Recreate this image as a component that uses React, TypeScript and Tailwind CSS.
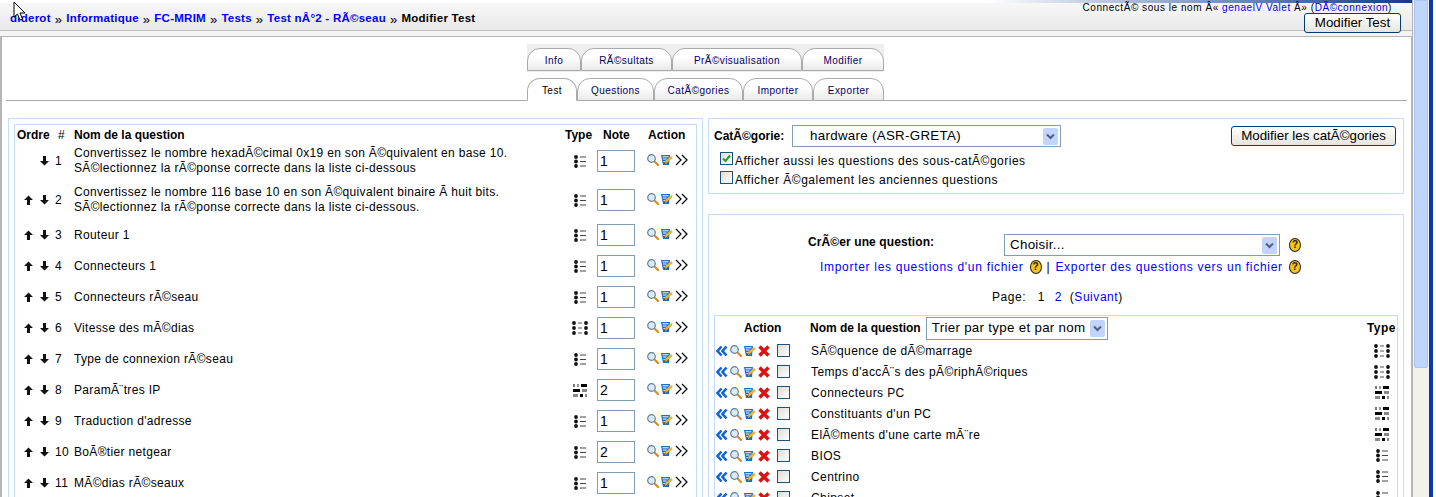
import React from "react"

const leftRows = [
  { n: 1, lines: ["Convertissez le nombre hexadÃ©cimal 0x19 en son Ã©quivalent en base 10.", "SÃ©lectionnez la rÃ©ponse correcte dans la liste ci-dessous"], type: "multi", note: "1", gap: "mb-[17px]" },
  { n: 2, lines: ["Convertissez le nombre 116 base 10 en son Ã©quivalent binaire Ã  huit bits.", "SÃ©lectionnez la rÃ©ponse correcte dans la liste ci-dessous."], type: "multi", note: "1", gap: "mb-[13px]" },
  { n: 3, lines: ["Routeur 1"], type: "multi", note: "1", gap: "mb-[9px]" },
  { n: 4, lines: ["Connecteurs 1"], type: "multi", note: "1", gap: "mb-[9px]" },
  { n: 5, lines: ["Connecteurs rÃ©seau"], type: "multi", note: "1", gap: "mb-[9px]" },
  { n: 6, lines: ["Vitesse des mÃ©dias"], type: "match", note: "1", gap: "mb-[9px]" },
  { n: 7, lines: ["Type de connexion rÃ©seau"], type: "multi", note: "1", gap: "mb-[9px]" },
  { n: 8, lines: ["ParamÃ¨tres IP"], type: "cloze", note: "2", gap: "mb-[9px]" },
  { n: 9, lines: ["Traduction d'adresse"], type: "multi", note: "1", gap: "mb-[9px]" },
  { n: 10, lines: ["BoÃ®tier netgear"], type: "multi", note: "2", gap: "mb-[9px]" },
  { n: 11, lines: ["MÃ©dias rÃ©seaux"], type: "multi", note: "1", gap: "mb-[9px]" },
]

const rightRows = [
  { name: "SÃ©quence de dÃ©marrage", type: "match" },
  { name: "Temps d'accÃ¨s des pÃ©riphÃ©riques", type: "match" },
  { name: "Connecteurs PC", type: "cloze" },
  { name: "Constituants d'un PC", type: "cloze" },
  { name: "ElÃ©ments d'une carte mÃ¨re", type: "cloze" },
  { name: "BIOS", type: "multi" },
  { name: "Centrino", type: "multi" },
  { name: "Chipset", type: "multi" },
]

function ArrowUp() {
  return (
    <svg width="9" height="10" viewBox="0 0 9 10">
      <path d="M4.5 0.5 L9 5 L6 5 L6 10 L3 10 L3 5 L0 5 Z" fill="#111" />
    </svg>
  )
}

function ArrowDown() {
  return (
    <svg width="9" height="10" viewBox="0 0 9 10">
      <path d="M4.5 9.5 L9 5 L6 5 L6 0 L3 0 L3 5 L0 5 Z" fill="#111" />
    </svg>
  )
}

function Magnifier() {
  return (
    <svg width="12" height="12" viewBox="0 0 12 12">
      <path d="M7 7 L11 11" stroke="#d98a1e" strokeWidth="2.2" strokeLinecap="round" />
      <circle cx="4.5" cy="4.5" r="3.8" fill="#dbeaf5" stroke="#5f7f96" strokeWidth="1.2" />
    </svg>
  )
}

function EditIcon() {
  return (
    <svg width="12" height="12" viewBox="0 0 12 12">
      <path d="M0 1 H9 L8 11 H2 Z" fill="#1d6fc4" />
      <path d="M1.5 2.8 H7.5 M2 5 H5.5 M2.5 7.5 H4" stroke="#fff" strokeWidth="1" />
      <path d="M3.5 9 L11 3" stroke="#f2b32a" strokeWidth="2.4" />
      <path d="M3 9.5 L4.5 8.2" stroke="#333" strokeWidth="1" />
    </svg>
  )
}

function ChevronsRight() {
  return (
    <svg width="13" height="12" viewBox="0 0 13 12">
      <path d="M1 1 L6 6 L1 11 M7 1 L12 6 L7 11" fill="none" stroke="#000" strokeWidth="1.2" />
    </svg>
  )
}

function ChevronsLeft() {
  return (
    <svg width="12" height="12" viewBox="0 0 12 12">
      <path d="M5.5 1.5 L1.5 6 L5.5 10.5 M10.5 1.5 L6.5 6 L10.5 10.5" fill="none" stroke="#0f62dc" strokeWidth="2.6" />
    </svg>
  )
}

function Cross() {
  return (
    <svg width="12" height="12" viewBox="0 0 12 12">
      <path d="M1.5 1.5 L10.5 10.5 M10.5 1.5 L1.5 10.5" stroke="#dd1111" strokeWidth="3.4" />
    </svg>
  )
}

function TypeIcon({ type }: { type: string }) {
  if (type === "match") {
    return (
      <svg width="16" height="14" viewBox="0 0 16 14">
        {[2, 7, 12].map((y) => (
          <g key={y}>
            <circle cx="2" cy={y} r="1.9" fill="#111" />
            <rect x="6" y={y - 0.5} width="4" height="1" fill="#555" />
            <circle cx="14" cy={y} r="1.9" fill="#111" />
          </g>
        ))}
      </svg>
    )
  }
  if (type === "cloze") {
    return (
      <svg width="15" height="13" viewBox="0 0 15 13">
        <rect x="0" y="0" width="2" height="3" fill="#777" />
        <rect x="4" y="0" width="2" height="3" fill="#999" />
        <rect x="8" y="0" width="6" height="3" fill="#000" />
        <rect x="0" y="5" width="7" height="3" fill="#000" />
        <rect x="9" y="5" width="5" height="3" fill="#888" />
        <rect x="0" y="10" width="5" height="3" fill="#888" />
        <rect x="7" y="10" width="3" height="3" fill="#000" />
        <rect x="12" y="10" width="2" height="3" fill="#888" />
      </svg>
    )
  }
  return (
    <svg width="12" height="13" viewBox="0 0 12 13">
      {[2, 6.5, 11].map((y) => (
        <g key={y}>
          <circle cx="2" cy={y} r="1.9" fill="#111" />
          <rect x="6" y={y - 0.5} width="6" height="1" fill="#444" />
        </g>
      ))}
    </svg>
  )
}

function Help() {
  return (
    <span className="inline-flex h-[14px] w-[12px] shrink-0 items-center justify-center rounded-[50%] border border-[#222] bg-[#f5c518] text-[10px] font-bold leading-none tracking-normal text-[#222]">
      ?
    </span>
  )
}

function SelectBox({ text, className }: { text: string; className: string }) {
  return (
    <div className={`flex shrink-0 items-center justify-between border border-[#7f9db9] bg-white pl-[1px] pr-[2px] text-[13.33px] tracking-[0.3px] text-black ${className}`}>
      <span className="whitespace-pre">{text}</span>
      <span className="flex h-[17px] w-[15px] items-center justify-center rounded-[2px] bg-[#c3d4fa]">
        <svg width="9" height="7" viewBox="0 0 9 7">
          <path d="M1 1.5 L4.5 5 L8 1.5" fill="none" stroke="#4d6185" strokeWidth="2" />
        </svg>
      </span>
    </div>
  )
}

function XpButton({ text, className }: { text: string; className: string }) {
  return (
    <button className={`flex shrink-0 items-center justify-center rounded-[3px] border border-[#003c74] bg-gradient-to-b from-white to-[#e6e4dc] text-[13.33px] leading-none tracking-normal text-black ${className}`}>
      {text}
    </button>
  )
}

function CheckBox({ checked = false }: { checked?: boolean }) {
  return (
    <span className="flex h-[13px] w-[13px] shrink-0 items-center justify-center border border-[#1c5180] bg-gradient-to-br from-[#dcdcd7] to-white">
      {checked && (
        <svg width="9" height="9" viewBox="0 0 9 9">
          <path d="M1 4.5 L3.5 7 L8 1.5" fill="none" stroke="#21a121" strokeWidth="2" />
        </svg>
      )}
    </span>
  )
}

function Tab({ label, className, active = false }: { label: string; className: string; active?: boolean }) {
  return (
    <div
      className={`flex h-[23px] items-center justify-center rounded-t-[13px] border border-[#aaaaaa] pt-[1px] text-[10px] tracking-[0.45px] ${
        active ? "relative z-10 border-b-white bg-white text-black" : "bg-gradient-to-b from-white from-40% to-[#e9e9e9] text-[#000066]"
      } ${className}`}
    >
      {label}
    </div>
  )
}

function Sep() {
  return <span className="mx-[4px] text-[13px] font-normal leading-none text-black">»</span>
}

export default function App() {
  return (
    <div className="flex h-[497px] w-[1436px] overflow-hidden bg-white font-['Liberation_Sans',Arial,sans-serif] text-[12px] tracking-[0.4px] text-black">
      <div className="relative flex w-[1412px] shrink-0 flex-col">
        {/* top strip + breadcrumb */}
        <div className="h-[3px] shrink-0 bg-gradient-to-r from-white from-70% to-[#123a86]" />
        <div className="flex h-[28px] shrink-0 justify-between border-b border-[#bbbbbb] bg-gradient-to-b from-[#f7f7f7] to-[#e9e9e9]">
          <div className="flex h-[32px] items-center pl-[10px] text-[11.5px] font-bold tracking-[0.25px] text-[#0000ff]">
            <a>diderot</a>
            <Sep />
            <a>Informatique</a>
            <Sep />
            <a>FC-MRIM</a>
            <Sep />
            <a>Tests</a>
            <Sep />
            <a>Test nÂ°2 - RÃ©seau</a>
            <Sep />
            <span className="text-black">Modifier Test</span>
          </div>
          <div className="z-10 flex flex-col items-end pr-[11px]">
            <div className="h-[12px] whitespace-nowrap pr-[9px] text-[10px] leading-[10px] tracking-[0.55px]">
              ConnectÃ© sous le nom Â« <a className="text-[#0000ff]">genaelV Valet</a> Â» (<a className="text-[#0000ff]">DÃ©connexion</a>)
            </div>
            <XpButton text="Modifier Test" className="h-[20px] w-[97px]" />
          </div>
        </div>
        <div className="h-[5px] shrink-0 bg-[#f4f4f4]" />

        {/* main box */}
        <div className="shrink-0 border-l-2 border-r border-t border-[#b5b5b5] pl-[4px] pr-[4px]">
          {/* tabs */}
          <div className="ml-[521px] mt-[7px] flex h-[28px] w-[357px] items-end bg-[#eeeeee] pb-[1px]">
            <Tab label="Info" className="w-[54px]" />
            <Tab label="RÃ©sultats" className="w-[91px]" />
            <Tab label="PrÃ©visualisation" className="w-[130px]" />
            <Tab label="Modifier" className="w-[82px]" />
          </div>
          <div className="mt-[6px] flex h-[23px] border-b border-[#aaaaaa] pl-[521px]">
            <Tab label="Test" className="w-[50px]" active />
            <Tab label="Questions" className="w-[77px]" />
            <Tab label="CatÃ©gories" className="w-[89px]" />
            <Tab label="Importer" className="w-[70px]" />
            <Tab label="Exporter" className="w-[71px]" />
          </div>

          <div className="mt-[17px] flex gap-[5px] pl-[2px]">
            {/* left panel */}
            <div className="h-[400px] w-[695px] shrink-0 border border-[#c3dcf8] px-[5px] pt-[5px]">
              <div className="h-[400px] border border-[#c3dcf8]">
                <div className="flex h-[25px] pt-[3px] font-bold leading-[14px] tracking-normal">
                  <span className="w-[37px] pl-[2px]">Ordre</span>
                  <span className="w-[22px] pl-[6px] font-normal">#</span>
                  <span className="w-[491px]">Nom de la question</span>
                  <span className="w-[38px]">Type</span>
                  <span className="w-[45px]">Note</span>
                  <span>Action</span>
                </div>
                {leftRows.map((row) => (
                  <div key={row.n} className={`flex h-[22px] items-center ${row.gap}`}>
                    <div className="flex w-[38px] justify-end gap-[7px] pr-[4px]">
                      {row.n > 1 && <ArrowUp />}
                      <ArrowDown />
                    </div>
                    <span className="w-[21px] pl-[2px]">{row.n}</span>
                    <div className="w-[489px] leading-[15px] tracking-[0.33px]">
                      {row.lines.map((line) => (
                        <div key={line} className="whitespace-nowrap">{line}</div>
                      ))}
                    </div>
                    <div className="flex w-[34px] justify-center">
                      <TypeIcon type={row.type} />
                    </div>
                    <input
                      readOnly
                      value={row.note}
                      className="h-[22px] w-[38px] border border-[#7f9db9] pl-[2px] text-[14px] tracking-normal outline-none"
                    />
                    <div className="-mt-[2px] ml-[12px] flex items-center gap-[2px]">
                      <Magnifier />
                      <EditIcon />
                      <ChevronsRight />
                    </div>
                  </div>
                ))}
              </div>
            </div>

            {/* right panel */}
            <div className="flex w-[696px] shrink-0 flex-col">
              <div className="h-[76px] border border-[#c3dcf8] pl-[5px] pr-[7px] pt-[6px]">
                <div className="flex h-[22px] items-center">
                  <span className="w-[78px] font-bold tracking-normal">CatÃ©gorie:</span>
                  <SelectBox text="    hardware (ASR-GRETA)" className="h-[22px] w-[269px]" />
                  <XpButton text="Modifier les catÃ©gories" className="ml-auto h-[20px] w-[165px]" />
                </div>
                <div className="mt-[5px] flex h-[13px] items-center gap-[2px] pl-[6px] tracking-[0.5px]">
                  <CheckBox checked />
                  <span className="mt-[4px]">Afficher aussi les questions des sous-catÃ©gories</span>
                </div>
                <div className="mt-[6px] flex h-[13px] items-center gap-[2px] pl-[6px] tracking-[0.5px]">
                  <CheckBox />
                  <span className="mt-[4px]">Afficher Ã©galement les anciennes questions</span>
                </div>
              </div>

              <div className="mt-[20px] h-[300px] border border-[#c3dcf8] px-[5px] pt-[19px]">
                <div className="flex h-[22px] items-center pl-[94px]">
                  <span className="-mt-[6px] w-[196px] font-bold tracking-[0.1px]">CrÃ©er une question:</span>
                  <SelectBox text=" Choisir..." className="h-[22px] w-[276px]" />
                  <span className="ml-[9px] flex"><Help /></span>
                </div>
                <div className="mt-[3px] flex h-[15px] items-center pl-[106px] tracking-[0.7px] text-[#0000ff]">
                  <a>Importer les questions d'un fichier</a>
                  <span className="ml-[6px] flex"><Help /></span>
                  <span className="ml-[5px] mr-[5px] text-black">|</span>
                  <a>Exporter des questions vers un fichier</a>
                  <span className="ml-[6px] flex"><Help /></span>
                </div>
                <div className="mt-[16px] h-[15px] whitespace-pre pl-[278px] leading-[15px] tracking-[0.55px]">
                  Page:{"   "}1{"  "}<a className="ml-[2px] text-[#0000ff]">2</a>{"  "}(<a className="text-[#0000ff]">Suivant</a>)
                </div>
                <div className="mt-[10px] h-[200px] border border-[#c3dcf8]">
                  <div className="flex h-[24px] items-center font-bold tracking-normal">
                    <span className="w-[95px] pl-[29px]">Action</span>
                    <span className="w-[116px] whitespace-nowrap">Nom de la question</span>
                    <SelectBox text=" Trier par type et par nom" className="h-[23px] w-[182px] font-normal" />
                    <span className="ml-auto pr-[1px] tracking-[0.5px]">Type</span>
                  </div>
                  {rightRows.map((row) => (
                    <div key={row.name} className="flex h-[21px] items-center">
                      <div className="flex w-[96px] items-center gap-[2px] pl-[1px]">
                        <ChevronsLeft />
                        <Magnifier />
                        <EditIcon />
                        <Cross />
                        <span className="ml-[5px] flex"><CheckBox /></span>
                      </div>
                      <span>{row.name}</span>
                      <div className="ml-auto flex w-[30px] justify-center">
                        <TypeIcon type={row.type} />
                      </div>
                    </div>
                  ))}
                </div>
              </div>
            </div>
          </div>
        </div>

        {/* mouse pointer from the capture */}
        <svg className="absolute left-[13px] top-[1px] z-20" width="13" height="22" viewBox="0 0 13 22">
          <path d="M1 1 L1 16 L4.5 13 L7 19 L9.5 18 L7 12 L12 12 Z" fill="#fff" stroke="#000" strokeWidth="1" />
        </svg>
      </div>

      {/* browser scrollbar */}
      <div className="flex w-[24px] shrink-0">
        <div className="flex h-full w-[17px] flex-col border-l border-[#b5b5b5] bg-[#f3f1ec] px-[1px]">
          <div className="h-[368px] rounded-b-[2px] border border-[#a9c4f5] bg-[#c0d5fb]" />
        </div>
        <div className="h-full w-[4px] bg-[#0a3aa8]" />
        <div className="h-full w-[3px] bg-white" />
      </div>
    </div>
  )
}
